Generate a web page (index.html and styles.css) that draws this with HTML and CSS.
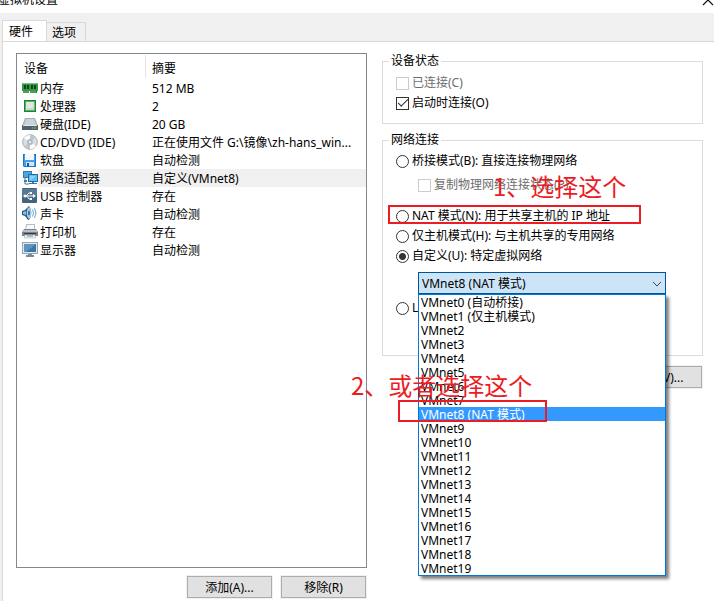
FILE: index.html
```html
<!DOCTYPE html>
<html lang="zh-CN">
<head>
<meta charset="utf-8">
<title>虚拟机设置</title>
<link rel="stylesheet" href="styles.css">
</head>
<body>
<header class="titlebar">
  <h1>虚拟机设置</h1>
  <button class="close" type="button" aria-label="关闭"><svg width="12" height="12" viewBox="0 0 12 12"><path d="M1 1l10 10M11 1L1 11" fill="none" stroke="#111" stroke-width="1.2"/></svg></button>
</header>
<nav class="tabs" role="tablist">
  <button class="tab active" type="button" role="tab" aria-selected="true">硬件</button>
  <button class="tab" type="button" role="tab" aria-selected="false">选项</button>
</nav>
<main class="panel">
  <section class="devices">
    <div class="list">
      <table>
        <thead><tr><th class="name-col">设备</th><th>摘要</th></tr></thead>
        <tbody>
          <tr><td><div class="device"><svg width="16" height="18" viewBox="0 0 16 18"><path d="M0 4h16v8H0z" fill="#2f9b43"/><path d="M0 4h16v1H0z" fill="#68c878"/><path d="M2 6h2v4H2zM5 6h2v4H5zM9 6h2v4H9zM12 6h2v4h-2z" fill="#26352b"/><path d="M1 12h6v2H1zM8 12h7v2H8z" fill="#147132"/><path d="M2 12v2M4 12v2M6 12v2M9 12v2M11 12v2M13 12v2" stroke="#9bc77c"/></svg><span>内存</span></div></td><td>512 MB</td></tr>
          <tr><td><div class="device"><svg width="16" height="18" viewBox="0 0 16 18"><path d="M2 3h12v12H2z" fill="#16863b"/><path d="M3 4h10v10H3z" fill="#54b15b"/><path d="M4 5h8v8H4z" fill="#e3e7e2"/><path d="M5 12h7V6" fill="none" stroke="#bac4b9"/></svg><span>处理器</span></div></td><td>2</td></tr>
          <tr><td><div class="device"><svg width="16" height="18" viewBox="0 0 16 18"><path d="M3 3h10l3 8H0z" fill="#a5b2bd"/><path d="M4 4h8l2 6H2z" fill="#cbd3da"/><path d="M0 10h16v5H0z" fill="#53616d"/><path d="M1 10h14v1H1z" fill="#e3e8eb"/><path d="M10 13h1" stroke="#e8b451"/><path d="M12 13h2" stroke="#61db56"/></svg><span>硬盘(IDE)</span></div></td><td>20 GB</td></tr>
          <tr><td><div class="device"><svg width="16" height="18" viewBox="0 0 16 18"><circle cx="8" cy="9" r="7.3" fill="#dce0e3" stroke="#a7adb2"/><path d="M8 9L2 5q2-3 6-3zM8 9l6 4q-2 3-6 3z" fill="#fff"/><path d="M8 9V2q3 0 5 3zM8 9v7q-3 0-5-3z" fill="#bdc6cc"/><circle cx="8" cy="9" r="3" fill="#b0bdc7"/><circle cx="8" cy="9" r="1.5" fill="#fff" stroke="#89959e" stroke-width=".5"/></svg><span>CD/DVD (IDE)</span></div></td><td>正在使用文件 G:\镜像\zh-hans_win...</td></tr>
          <tr><td><div class="device"><svg width="16" height="18" viewBox="0 0 16 18"><path d="M1 3h13v13H2l-1-1z" fill="#1976cf"/><path d="M2 4h11v11H2z" fill="#459fed"/><path d="M3 3h9v6H3z" fill="#f3f7fa"/><path d="M4 11h8v4H4z" fill="#d5e4f0"/><path d="M5 12h2v3H5z" fill="#18568b"/></svg><span>软盘</span></div></td><td>自动检测</td></tr>
          <tr class="selected"><td><div class="device"><svg width="16" height="18" viewBox="0 0 16 18"><path d="M1 2h9v7H1z" fill="#3a78a5"/><path d="M2 3h7v5H2z" fill="#47a6e6"/><path d="M3 9v6h4" fill="none" stroke="#42749a"/><path d="M2 11h3v2H2z" fill="#447da4"/><path d="M6 5h10v8H6z" fill="#276b9d"/><path d="M7 6h8v6H7z" fill="#5cbcf4"/><path d="M8 7h6l-5 4H8z" fill="#85d4fa"/><path d="M10 13h2v1h3v1H7v-1h3z" fill="#3b76a2"/></svg><span>网络适配器</span></div></td><td>自定义(VMnet8)</td></tr>
          <tr><td><div class="device"><svg width="16" height="18" viewBox="0 0 16 18"><rect y="1" width="15" height="15" rx="1" fill="#416581"/><path d="M0 2h15v6L0 10z" fill="#587b93"/><path d="M2 9h9M4 9l3-3h2M5 9l2 3h2" fill="none" stroke="#fff"/><circle cx="3" cy="9" r="1.5" fill="#fff"/><path d="M11 7l3 2-3 2zM8 5h2v2H8zM8 11h2v2H8z" fill="#fff"/></svg><span>USB 控制器</span></div></td><td>存在</td></tr>
          <tr><td><div class="device"><svg width="16" height="18" viewBox="0 0 16 18"><path d="M0 6l3-1 4-4q3 4 2 9t-3 5l-3-4-3-1z" fill="#245c89"/><path d="M1 7l3-1v4l-3-1z" fill="#84bce0"/><ellipse cx="7" cy="8" rx="2.3" ry="5.7" fill="#a5cae0"/><ellipse cx="7" cy="8" rx="1" ry="2.5" fill="#3c7097"/><path d="M10.500 4.500q2 3.500 0 7M12.500 3q3 5 0 10" fill="none" stroke="#63a6cf"/></svg><span>声卡</span></div></td><td>自动检测</td></tr>
          <tr><td><div class="device"><svg width="16" height="18" viewBox="0 0 16 18"><path d="M4 1h9v7H3z" fill="#b9bec4"/><path d="M5 2h7v5H4z" fill="#f8f9fb"/><path d="M2 6h12l2 3v4H0V9z" fill="#7c828d"/><path d="M1 7h14v2H1z" fill="#b9bec7"/><path d="M2 10h12v1H2z" fill="#343b45"/><path d="M3 12h10l1 3H2z" fill="#eef1f3" stroke="#a1a8ae" stroke-width=".5"/><path d="M5 13h6" stroke="#59a46e"/></svg><span>打印机</span></div></td><td>存在</td></tr>
          <tr><td><div class="device"><svg width="16" height="18" viewBox="0 0 16 18"><path d="M0 1h16v12H0z" fill="#91a6b4"/><path d="M1 2h14v10H1z" fill="#e0e9ee"/><path d="M2 3h12v8H2z" fill="#41749f"/><path d="M2 3h12L4 11H2z" fill="#6095bd"/><path d="M6 13h4v1h2v2H4v-2h2z" fill="#758c9d"/></svg><span>显示器</span></div></td><td>自动检测</td></tr>
        </tbody>
      </table>
    </div>
    <div class="actions">
      <button class="button" type="button">添加(A)...</button>
      <button class="button" type="button">移除(R)</button>
    </div>
  </section>
  <section class="settings">
    <fieldset class="status">
      <legend>设备状态</legend>
      <label class="choice disabled"><input type="checkbox" disabled>已连接(C)</label>
      <label class="choice"><input type="checkbox" checked>启动时连接(O)</label>
    </fieldset>
    <fieldset class="network">
      <legend>网络连接</legend>
      <label class="choice"><input type="radio" name="net">桥接模式(B): 直接连接物理网络</label>
      <label class="choice nested disabled"><input type="checkbox" disabled>复制物理网络连接状态(P)</label>
      <div class="nat">
        <label class="choice"><input type="radio" name="net">NAT 模式(N): 用于共享主机的 IP 地址</label>
        <div class="mark mark-nat"></div>
        <p class="note note-nat">1、选择这个</p>
      </div>
      <label class="choice"><input type="radio" name="net">仅主机模式(H): 与主机共享的专用网络</label>
      <label class="choice"><input type="radio" name="net" checked>自定义(U): 特定虚拟网络</label>
      <div class="combo">
        <select aria-label="特定虚拟网络"><option>VMnet8 (NAT 模式)</option></select>
        <svg class="chevron" width="10" height="6" viewBox="0 0 10 6"><path d="M1 1l4 4 4-4" fill="none" stroke="#444"/></svg>
        <div class="popup">
          <ul role="listbox" aria-label="虚拟网络">
            <li role="option">VMnet0 (自动桥接)</li>
            <li role="option">VMnet1 (仅主机模式)</li>
            <li role="option">VMnet2</li>
            <li role="option">VMnet3</li>
            <li role="option">VMnet4</li>
            <li role="option">VMnet5</li>
            <li role="option">VMnet6</li>
            <li role="option">VMnet7</li>
            <li role="option" aria-selected="true" class="current">VMnet8 (NAT 模式)</li>
            <li role="option">VMnet9</li>
            <li role="option">VMnet10</li>
            <li role="option">VMnet11</li>
            <li role="option">VMnet12</li>
            <li role="option">VMnet13</li>
            <li role="option">VMnet14</li>
            <li role="option">VMnet15</li>
            <li role="option">VMnet16</li>
            <li role="option">VMnet17</li>
            <li role="option">VMnet18</li>
            <li role="option">VMnet19</li>
          </ul>
          <div class="mark mark-vmnet"></div>
          <p class="note note-vmnet">2、或者选择这个</p>
        </div>
      </div>
      <label class="choice"><input type="radio" name="net">LAN 区段(L):</label>
    </fieldset>
    <button class="button advanced" type="button">高级(V)...</button>
  </section>
</main>
</body>
</html>
```
FILE: styles.css
```css
* { box-sizing: border-box; }

body {
  display: flex;
  flex-direction: column;
  min-height: 100vh;
  margin: 0;
  background: #f0f0f0;
  color: #000;
  font: 12px/16px "Noto Sans", "Noto Sans CJK SC", sans-serif;
}

button, select, input { font: inherit; color: inherit; margin: 0; }

.titlebar {
  display: flex;
  justify-content: space-between;
  align-items: flex-start;
  height: 13px;
  overflow: hidden;
  background: #fff;
}

.titlebar h1 {
  margin: -8px 0 0 -2px;
  font-size: 12px;
  font-weight: 400;
}

.close {
  height: 12px;
  margin-top: -6px;
  padding: 0;
  border: 0;
  background: none;
}

.close svg { display: block; }

.tabs {
  display: flex;
  align-items: flex-end;
  height: 28px;
  padding-left: 2px;
}

.tab {
  height: 19px;
  padding: 2px 9px 0 5px;
  border: 1px solid #d9d9d9;
  border-bottom: 0;
  border-left: 0;
  background: #f0f0f0;
}

.tab.active {
  height: 22px;
  margin-bottom: -1px;
  padding: 0 13px 0 6px;
  border-left: 1px solid #d9d9d9;
  background: #fff;
}

.panel {
  flex: 1;
  display: grid;
  grid-template-columns: 351fr 321fr;
  gap: 15px;
  margin-left: 2px;
  padding: 11px 11px 3px 13px;
  border: solid #d9d9d9;
  border-width: 1px 0 0 1px;
  background: #fff;
}

.devices {
  display: flex;
  flex-direction: column;
  gap: 8px;
  min-width: 0;
}

.list {
  flex: 1;
  border: 1px solid #828790;
}

table {
  width: 100%;
  table-layout: fixed;
  border-collapse: collapse;
}

th {
  height: 25px;
  padding: 4px 6px 0;
  text-align: left;
  font-weight: 400;
}

.name-col {
  width: 129px;
  padding-left: 7px;
  background: linear-gradient(#e5e5e5, #e5e5e5) right / 1px 23px no-repeat;
}

td {
  height: 18px;
  padding: 2px 0 0 6px;
  white-space: nowrap;
}

td:first-child { padding: 0 0 0 5px; }

.device { display: flex; height: 18px; }

.device span { flex: 1; padding: 2px 0 0 2px; }

.selected td:last-child, .selected span { background: #f0f0f0; }

.actions {
  display: flex;
  justify-content: flex-end;
  gap: 9px;
  padding-right: 1px;
}

.button {
  width: 85px;
  height: 22px;
  padding: 1px 0 0;
  border: 1px solid #adadad;
  background: #e1e1e1;
  box-shadow: 0 0 0 1px #f0f0f0;
}

.settings {
  display: flex;
  flex-direction: column;
  min-width: 0;
}

fieldset {
  min-width: 0;
  margin: 0 0 8px;
  padding: 4px 12px 10px 13px;
  border: 1px solid #dcdcdc;
}

legend { margin-left: -7px; padding: 0 2px; }

.network { margin-bottom: 10px; padding-top: 3px; padding-bottom: 37px; }

.choice {
  display: flex;
  align-items: center;
  gap: 3px;
  height: 20px;
  line-height: 18px;
  white-space: nowrap;
}

.choice input {
  appearance: none;
  flex: none;
  width: 13px;
  height: 13px;
  border: 1px solid #333;
  background: #fff;
}

.choice input[type="radio"] { border-radius: 50%; }

.choice input[type="radio"]:checked {
  background: radial-gradient(circle, #333 3px, #fff 4px);
}

.choice input[type="checkbox"]:checked {
  display: grid;
  place-items: center;
}

.choice input[type="checkbox"]:checked::before {
  content: "";
  width: 9px;
  height: 4px;
  margin-bottom: 3px;
  border: solid #333;
  border-width: 0 0 1px 1px;
  rotate: -45deg;
}

.choice.disabled { color: #6d6d6d; }

.choice.disabled input { border-color: #ccc; }

.nested { margin: 4px 0 0 22px; }

.nat { position: relative; margin-top: 11px; }

.combo {
  position: relative;
  margin: 6px 24px 4px 22px;
}

.combo select {
  appearance: none;
  display: block;
  width: 100%;
  height: 22px;
  padding: 1px 3px 0;
  border: 1px solid #00559b;
  border-radius: 0;
  background: #cce4f7;
}

.chevron {
  position: absolute;
  top: 9px;
  right: 4px;
}

.popup {
  position: absolute;
  z-index: 1;
  top: 100%;
  left: 0;
  right: 0;
  border: 1px solid #0078d7;
  background: #fff;
  box-shadow: 3px 3px 3px rgba(0, 0, 0, 0.5);
}

.popup ul { margin: 0; padding: 0; list-style: none; }

.popup li {
  height: 14px;
  padding-left: 2px;
  line-height: 16px;
}

.popup .current { background: #3399ff; color: #fff; }

.mark {
  position: absolute;
  border: 2px solid #ed1c24;
}

.mark-nat { top: -1px; left: -8px; width: 253px; height: 19px; }

.mark-vmnet { top: 105px; left: -21px; width: 149px; height: 22px; }

.note {
  position: absolute;
  margin: 0;
  color: #ed1c24;
  font: 24px/32px "Noto Sans CJK SC", sans-serif;
  white-space: nowrap;
}

.note-nat { top: -36px; left: 97px; }

.note-vmnet { top: 74px; left: -68px; }

.advanced { align-self: flex-end; margin-right: 1px; }
```
